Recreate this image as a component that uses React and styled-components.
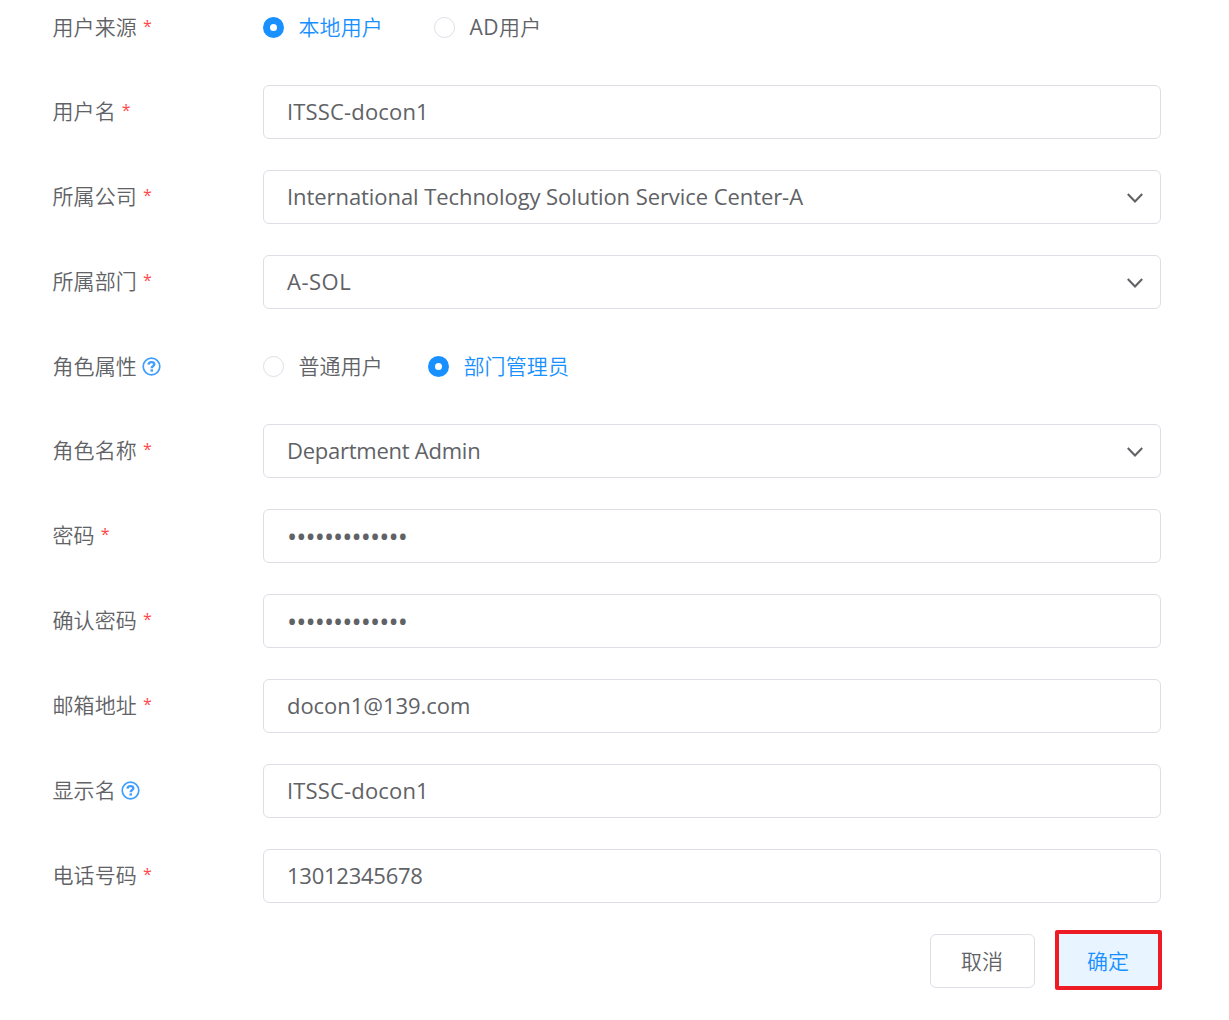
import React from "react";
import styled, { createGlobalStyle } from "styled-components";

const GlobalStyle = createGlobalStyle`
  * { box-sizing: border-box; }
  body {
    margin: 0;
    background: #fff;
    color: #606266;
    font-family: "Open Sans", "Noto Sans CJK SC", sans-serif;
    font-size: 21px;
    overflow: hidden;
  }
`;

const Page = styled.main`
  width: 1229px;
  height: 1020px;
  padding-left: 53px;
  background: #fff;
`;

const Form = styled.form`
  display: flex;
  flex-direction: column;
  gap: 31px;
  width: 1108px;
`;

const Row = styled.div`
  display: grid;
  grid-template-columns: 210px 898px;
  align-items: center;
  height: ${(p) => p.$height || 54}px;
`;

const Label = styled.div`
  display: flex;
  align-items: center;
  height: 30px;
  margin: 0 0 ${(p) => p.$lift}px -0.5px;
  line-height: 30px;
  font-weight: 350;
  letter-spacing: 0.1px;
  white-space: nowrap;
`;

const Required = styled.span`
  margin-left: 6px;
  padding-bottom: 2px;
  color: #ff4949;
  font-size: 16px;
  font-weight: 400;
  line-height: 28px;
`;

const HelpIcon = styled.svg`
  width: 19px;
  height: 19px;
  margin-top: 1px;
  margin-left: 5.5px;
  color: #409eff;
`;

const Field = styled.div`
  display: flex;
  align-items: center;
  justify-content: space-between;
  height: 54px;
  padding: 0 17px 2px 23px;
  border: 1px solid #dcdfe6;
  border-radius: 6px;
  background: #fff;
`;

const Value = styled.span`
  font-size: 22px;
  line-height: 30px;
  letter-spacing: ${(p) => p.$tracking || 0}px;
  white-space: nowrap;
`;

const Masked = styled.span`
  padding-top: 4px;
  font-size: 27px;
  line-height: 30px;
  letter-spacing: -0.93px;
  white-space: nowrap;
`;

const Chevron = styled.svg`
  width: 16px;
  height: 10px;
  margin-top: 3px;
`;

const RadioGroup = styled.div`
  display: flex;
  gap: ${(p) => p.$gap}px;
`;

const Radio = styled.div`
  display: flex;
  align-items: center;
  gap: 14.5px;
  height: 30px;
  line-height: 30px;
  font-weight: 350;
  white-space: nowrap;
  color: ${(p) => (p.$checked ? "#1890ff" : "#606266")};
`;

const RadioMark = styled.span`
  width: 21px;
  height: 21px;
  border: ${(p) => (p.$checked ? "7.5px solid #1890ff" : "1px solid #dcdfe6")};
  border-radius: 50%;
  background: #fff;
`;

const RadioText = styled.span`
  padding-bottom: ${(p) => p.$lift}px;
  letter-spacing: 0.1px;
`;

const Latin = styled.span`
  font-weight: 400;
  letter-spacing: 0.5px;
`;

const Actions = styled.div`
  display: flex;
  align-items: center;
  justify-content: flex-end;
  gap: 20px;
  height: 60px;
  margin: -4px -1px 0 0;
`;

const Button = styled.button`
  display: flex;
  align-items: center;
  justify-content: center;
  width: 105px;
  height: 54px;
  margin-top: 2px;
  padding: 0 1px 0 0;
  border: 1px solid #dcdfe6;
  border-radius: 6px;
  background: #fff;
  color: #606266;
  font: inherit;
  font-weight: 350;
  line-height: 30px;
`;

const PrimaryButton = styled(Button)`
  width: 107px;
  height: 60px;
  margin-top: 0;
  padding-top: 2px;
  border: 4px solid #ed1c24;
  border-radius: 2px;
  background: #e8f4ff;
  color: #1890ff;
`;

const Help = () => (
  <HelpIcon viewBox="0 0 19 19" fill="none" stroke="currentColor">
    <circle cx="9.5" cy="9.5" r="8.3" strokeWidth="1.7" />
    <path d="M6.5 7.6C6.6 5.9 7.8 5.1 9.5 5.1c1.7 0 2.8.9 2.8 2.2 0 1-.7 1.5-1.4 2-.8.6-1.2.9-1.2 1.9" strokeWidth="2.4" />
    <path d="M8.5 13.5h2.5" strokeWidth="2.3" />
  </HelpIcon>
);

const Arrow = () => (
  <Chevron viewBox="0 0 16 10" fill="none" stroke="#606266" strokeWidth="2.1">
    <path d="M.8 1.1 8 8.4l7.2-7.3" />
  </Chevron>
);

const Item = ({ label, required, help, height, lift = 2, children }) => (
  <Row $height={height}>
    <Label $lift={lift}>
      {label}
      {required && <Required>*</Required>}
      {help && <Help />}
    </Label>
    {children}
  </Row>
);

const Text = ({ value, tracking, select }) => (
  <Field>
    <Value $tracking={tracking}>{value}</Value>
    {select && <Arrow />}
  </Field>
);

const Password = () => (
  <Field>
    <Masked>{"•".repeat(13)}</Masked>
  </Field>
);

const Option = ({ checked, lift = 0, children }) => (
  <Radio $checked={checked}>
    <RadioMark $checked={checked} />
    <RadioText $lift={lift}>{children}</RadioText>
  </Radio>
);

export default function App() {
  return (
    <>
      <GlobalStyle />
      <Page>
        <Form>
          <Item label="用户来源" required lift={0}>
            <RadioGroup $gap={51.1}>
              <Option checked>本地用户</Option>
              <Option><Latin>AD</Latin>用户</Option>
            </RadioGroup>
          </Item>
          <Item label="用户名" required><Text value="ITSSC-docon1" tracking={0.16} /></Item>
          <Item label="所属公司" required>
            <Text value="International Technology Solution Service Center-A" tracking={-0.07} select />
          </Item>
          <Item label="所属部门" required><Text value="A-SOL" tracking={0.5} select /></Item>
          <Item label="角色属性" help height={53}>
            <RadioGroup $gap={45.1}>
              <Option lift={2}>普通用户</Option>
              <Option checked lift={2}>部门管理员</Option>
            </RadioGroup>
          </Item>
          <Item label="角色名称" required><Text value="Department Admin" tracking={-0.25} select /></Item>
          <Item label="密码" required><Password /></Item>
          <Item label="确认密码" required><Password /></Item>
          <Item label="邮箱地址" required><Text value="docon1@139.com" tracking={-0.05} /></Item>
          <Item label="显示名" help><Text value="ITSSC-docon1" tracking={0.16} /></Item>
          <Item label="电话号码" required><Text value="13012345678" tracking={-0.25} /></Item>
          <Actions>
            <Button type="button">取消</Button>
            <PrimaryButton type="button">确定</PrimaryButton>
          </Actions>
        </Form>
      </Page>
    </>
  );
}
